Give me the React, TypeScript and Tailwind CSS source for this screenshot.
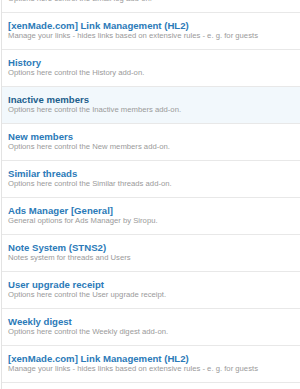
import React from "react";

const rows: { title: string; desc: string; active?: boolean }[] = [
  { title: "Email log", desc: "Options here control the Email log add-on." },
  { title: "[xenMade.com] Link Management (HL2)", desc: "Manage your links - hides links based on extensive rules - e. g. for guests" },
  { title: "History", desc: "Options here control the History add-on." },
  { title: "Inactive members", desc: "Options here control the Inactive members add-on.", active: true },
  { title: "New members", desc: "Options here control the New members add-on." },
  { title: "Similar threads", desc: "Options here control the Similar threads add-on." },
  { title: "Ads Manager [General]", desc: "General options for Ads Manager by Siropu." },
  { title: "Note System (STNS2)", desc: "Notes system for threads and Users" },
  { title: "User upgrade receipt", desc: "Options here control the User upgrade receipt." },
  { title: "Weekly digest", desc: "Options here control the Weekly digest add-on." },
  { title: "[xenMade.com] Link Management (HL2)", desc: "Manage your links - hides links based on extensive rules - e. g. for guests" },
  { title: "", desc: "" },
];

export default function App() {
  return (
    <div className="w-[300px] h-[389px] overflow-hidden bg-white" style={{ fontFamily: '"Liberation Sans", Arial, sans-serif' }}>
      <div className="-mt-[24px] ml-[1px] border-l border-[#e3e3e3]">
        {rows.map((r, i) => (
          <div
            key={i}
            className={`h-[37px] border-b border-[#e8e8e8] pl-[6px] pt-[7px] ${r.active ? "bg-[#f2f8fc]" : "bg-white"}`}
          >
            <div className={`text-[9.6px] leading-[11px] font-bold whitespace-nowrap ${r.active ? "text-[#1d5f8c]" : "text-[#2b7ab8]"}`}>
              {r.title}
            </div>
            <div className="text-[7.7px] leading-[9px] text-[#9a9a9a] whitespace-nowrap">{r.desc}</div>
          </div>
        ))}
      </div>
    </div>
  );
}
